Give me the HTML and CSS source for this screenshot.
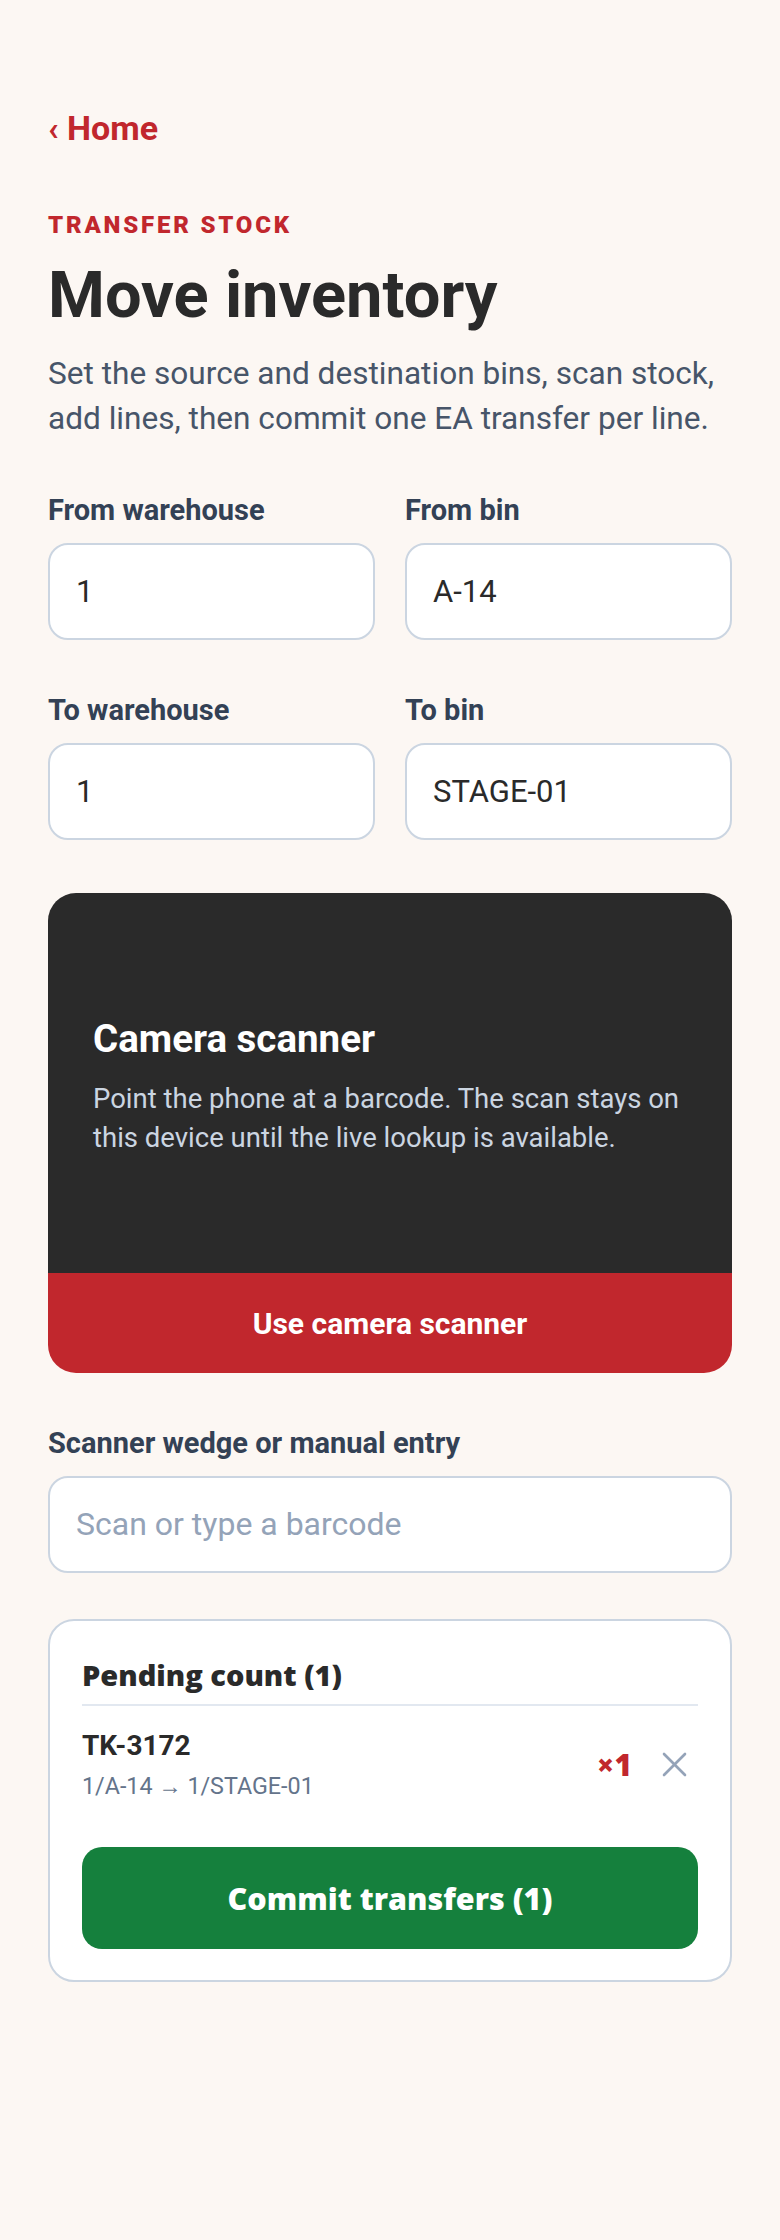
FILE: index.html
```html
<!DOCTYPE html>
<html lang="en">
<head>
<meta charset="utf-8">
<title>Move inventory</title>
<link rel="stylesheet" href="styles.css">
</head>
<body>
<main class="page">
  <a class="back" href="#">‹ Home</a>
  <p class="eyebrow">TRANSFER STOCK</p>
  <h1 class="title">Move inventory</h1>
  <p class="lead">Set the source and destination bins, scan stock, add lines, then commit one EA transfer per line.</p>

  <section class="fields">
    <label class="field">
      <span class="field-label">From warehouse</span>
      <input class="input" type="text" value="1">
    </label>
    <label class="field">
      <span class="field-label">From bin</span>
      <input class="input" type="text" value="A-14">
    </label>
    <label class="field">
      <span class="field-label">To warehouse</span>
      <input class="input" type="text" value="1">
    </label>
    <label class="field">
      <span class="field-label">To bin</span>
      <input class="input" type="text" value="STAGE-01">
    </label>
  </section>

  <section class="camera">
    <div class="camera-body">
      <h2 class="camera-title">Camera scanner</h2>
      <p class="camera-text">Point the phone at a barcode. The scan stays on this device until the live lookup is available.</p>
    </div>
    <button class="camera-btn" type="button">Use camera scanner</button>
  </section>

  <label class="field scan-field">
    <span class="field-label">Scanner wedge or manual entry</span>
    <input class="input" type="text" placeholder="Scan or type a barcode">
  </label>

  <section class="pending">
    <h2 class="pending-title">Pending count (1)</h2>
    <div class="line">
      <div class="line-info">
        <div class="line-sku">TK-3172</div>
        <div class="line-route">1/A-14 → 1/STAGE-01</div>
      </div>
      <div class="line-qty">×1</div>
      <button class="line-remove" type="button" aria-label="Remove">
        <svg width="25" height="25" viewBox="0 0 25 25" fill="none" stroke="#94a3b8" stroke-width="2.6" stroke-linecap="round">
          <line x1="2" y1="2" x2="23" y2="23"/>
          <line x1="23" y1="2" x2="2" y2="23"/>
        </svg>
      </button>
    </div>
    <button class="commit" type="button">Commit transfers (1)</button>
  </section>
</main>
</body>
</html>
```

FILE: styles.css
```css
* { box-sizing: border-box; }

html, body {
  margin: 0;
  background: #fcf7f3;
}

body {
  font-family: Roboto, "Liberation Sans", sans-serif;
  color: #2a2a2a;
  min-height: 2240px;
}

.page {
  padding: 110px 48px 120px;
  display: flex;
  flex-direction: column;
}

.back {
  display: block;
  font-size: 34px;
  line-height: 36px;
  font-weight: 700;
  color: #c1272d;
  text-decoration: none;
  align-self: flex-start;
}

.eyebrow {
  margin: 64px 0 0;
  font-size: 24px;
  line-height: 30px;
  font-weight: 900;
  letter-spacing: 2.8px;
  color: #c1272d;
}

.title {
  margin: 18px 0 0;
  font-size: 65px;
  line-height: 74px;
  font-weight: 700;
  color: #2a2a2a;
}

.lead {
  margin: 19px 0 0;
  font-size: 31.6px;
  line-height: 45px;
  color: #475569;
}

.fields {
  margin-top: 52px;
  display: grid;
  grid-template-columns: 1fr 1fr;
  column-gap: 30px;
  row-gap: 53px;
}

.field {
  display: flex;
  flex-direction: column;
  gap: 16px;
}

.field-label {
  font-size: 29px;
  line-height: 34px;
  font-weight: 700;
  color: #334155;
}

.input {
  width: 100%;
  height: 97px;
  border: 2px solid #cbd5e1;
  border-radius: 20px;
  background: #fff;
  padding: 0 26px;
  font-family: Roboto, "Liberation Sans", sans-serif;
  font-size: 31px;
  color: #2a2a2a;
  outline: none;
}

.input::placeholder {
  color: #94a3b8;
  font-size: 32px;
}

.camera {
  margin-top: 53px;
  border-radius: 28px;
  overflow: hidden;
  display: flex;
  flex-direction: column;
}

.camera-body {
  background: #2a2a2a;
  height: 380px;
  padding: 44px 40px 36px 45px;
  display: flex;
  flex-direction: column;
  justify-content: center;
}

.camera-title {
  margin: 0;
  font-size: 38.5px;
  line-height: 44px;
  font-weight: 700;
  color: #fff;
}

.camera-text {
  margin: 18px 0 0;
  font-size: 27.5px;
  line-height: 39px;
  color: #cbd5e1;
}

.camera-btn {
  height: 100px;
  border: 0;
  background: #c1272d;
  color: #fff;
  font-family: Roboto, "Liberation Sans", sans-serif;
  font-size: 30px;
  font-weight: 700;
}

.scan-field {
  margin-top: 53px;
}

.pending {
  margin-top: 46px;
  background: #fff;
  border: 2px solid #cbd5e1;
  border-radius: 26px;
  padding: 36px 32px 31px 32px;
  display: flex;
  flex-direction: column;
}

.pending-title {
  margin: 0;
  padding-bottom: 11px;
  border-bottom: 2px solid #e2e8f0;
  font-family: "Open Sans", Roboto, sans-serif;
  font-size: 29px;
  line-height: 36px;
  font-weight: 800;
  color: #2a2a2a;
}

.line {
  margin-top: 23px;
  display: flex;
  align-items: center;
  padding-right: 11px;
}

.line-info {
  flex: 1;
  display: flex;
  flex-direction: column;
  gap: 9px;
}

.line-sku {
  font-size: 28px;
  line-height: 34px;
  font-weight: 700;
  color: #2a2a2a;
}

.line-route {
  font-size: 23.3px;
  line-height: 28px;
  color: #64748b;
}

.line-qty {
  font-family: "Open Sans", Roboto, sans-serif;
  font-size: 30px;
  line-height: 36px;
  font-weight: 800;
  color: #c1272d;
}

.line-remove {
  margin-left: 30px;
  padding: 0;
  border: 0;
  background: none;
  width: 25px;
  height: 25px;
  display: flex;
}

.commit {
  margin-top: 47px;
  height: 102px;
  border: 0;
  border-radius: 20px;
  background: #15803d;
  color: #fff;
  font-family: "Open Sans", Roboto, sans-serif;
  font-size: 30.5px;
  font-weight: 800;
}
```
